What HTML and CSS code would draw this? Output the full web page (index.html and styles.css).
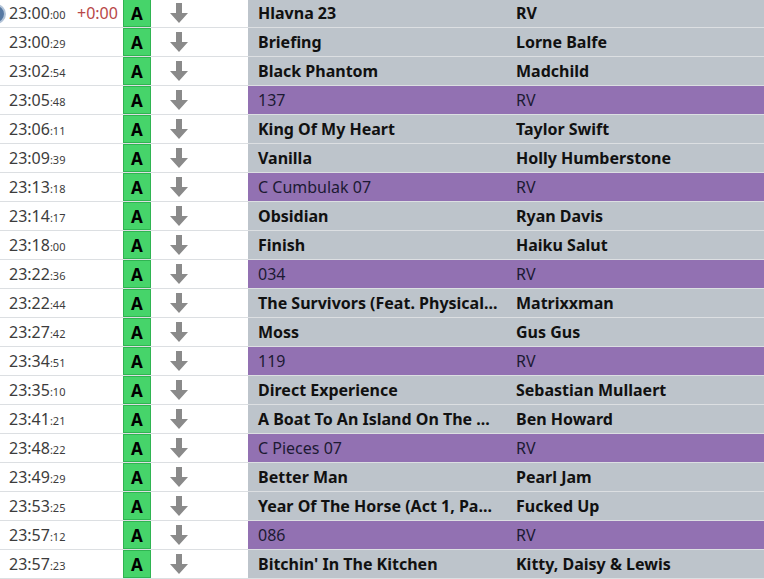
FILE: index.html
```html
<!DOCTYPE html>
<html>
<head>
<meta charset="utf-8">
<link rel="stylesheet" href="styles.css">
</head>
<body>
<div class="list">
  <div class="row"><span class="dot"></span><div class="time">23:00<small>:00</small></div><div class="offset">+0:00</div><div class="flag">A</div><div class="move"><svg viewBox="0 0 18 20" width="18" height="20"><path d="M6 0h6v10h6l-9 10l-9-10h6z" fill="#8a8a8a"/></svg></div><div class="info"><div class="title">Hlavna 23</div><div class="artist">RV</div></div></div>
  <div class="row"><div class="time">23:00<small>:29</small></div><div class="offset"></div><div class="flag">A</div><div class="move"><svg viewBox="0 0 18 20" width="18" height="20"><path d="M6 0h6v10h6l-9 10l-9-10h6z" fill="#8a8a8a"/></svg></div><div class="info"><div class="title">Briefing</div><div class="artist">Lorne Balfe</div></div></div>
  <div class="row"><div class="time">23:02<small>:54</small></div><div class="offset"></div><div class="flag">A</div><div class="move"><svg viewBox="0 0 18 20" width="18" height="20"><path d="M6 0h6v10h6l-9 10l-9-10h6z" fill="#8a8a8a"/></svg></div><div class="info"><div class="title">Black Phantom</div><div class="artist">Madchild</div></div></div>
  <div class="row"><div class="time">23:05<small>:48</small></div><div class="offset"></div><div class="flag">A</div><div class="move"><svg viewBox="0 0 18 20" width="18" height="20"><path d="M6 0h6v10h6l-9 10l-9-10h6z" fill="#8a8a8a"/></svg></div><div class="info jingle"><div class="title">137</div><div class="artist">RV</div></div></div>
  <div class="row"><div class="time">23:06<small>:11</small></div><div class="offset"></div><div class="flag">A</div><div class="move"><svg viewBox="0 0 18 20" width="18" height="20"><path d="M6 0h6v10h6l-9 10l-9-10h6z" fill="#8a8a8a"/></svg></div><div class="info"><div class="title">King Of My Heart</div><div class="artist">Taylor Swift</div></div></div>
  <div class="row"><div class="time">23:09<small>:39</small></div><div class="offset"></div><div class="flag">A</div><div class="move"><svg viewBox="0 0 18 20" width="18" height="20"><path d="M6 0h6v10h6l-9 10l-9-10h6z" fill="#8a8a8a"/></svg></div><div class="info"><div class="title">Vanilla</div><div class="artist">Holly Humberstone</div></div></div>
  <div class="row"><div class="time">23:13<small>:18</small></div><div class="offset"></div><div class="flag">A</div><div class="move"><svg viewBox="0 0 18 20" width="18" height="20"><path d="M6 0h6v10h6l-9 10l-9-10h6z" fill="#8a8a8a"/></svg></div><div class="info jingle"><div class="title">C Cumbulak 07</div><div class="artist">RV</div></div></div>
  <div class="row"><div class="time">23:14<small>:17</small></div><div class="offset"></div><div class="flag">A</div><div class="move"><svg viewBox="0 0 18 20" width="18" height="20"><path d="M6 0h6v10h6l-9 10l-9-10h6z" fill="#8a8a8a"/></svg></div><div class="info"><div class="title">Obsidian</div><div class="artist">Ryan Davis</div></div></div>
  <div class="row"><div class="time">23:18<small>:00</small></div><div class="offset"></div><div class="flag">A</div><div class="move"><svg viewBox="0 0 18 20" width="18" height="20"><path d="M6 0h6v10h6l-9 10l-9-10h6z" fill="#8a8a8a"/></svg></div><div class="info"><div class="title">Finish</div><div class="artist">Haiku Salut</div></div></div>
  <div class="row"><div class="time">23:22<small>:36</small></div><div class="offset"></div><div class="flag">A</div><div class="move"><svg viewBox="0 0 18 20" width="18" height="20"><path d="M6 0h6v10h6l-9 10l-9-10h6z" fill="#8a8a8a"/></svg></div><div class="info jingle"><div class="title">034</div><div class="artist">RV</div></div></div>
  <div class="row"><div class="time">23:22<small>:44</small></div><div class="offset"></div><div class="flag">A</div><div class="move"><svg viewBox="0 0 18 20" width="18" height="20"><path d="M6 0h6v10h6l-9 10l-9-10h6z" fill="#8a8a8a"/></svg></div><div class="info"><div class="title">The Survivors (Feat. Physical...</div><div class="artist">Matrixxman</div></div></div>
  <div class="row"><div class="time">23:27<small>:42</small></div><div class="offset"></div><div class="flag">A</div><div class="move"><svg viewBox="0 0 18 20" width="18" height="20"><path d="M6 0h6v10h6l-9 10l-9-10h6z" fill="#8a8a8a"/></svg></div><div class="info"><div class="title">Moss</div><div class="artist">Gus Gus</div></div></div>
  <div class="row"><div class="time">23:34<small>:51</small></div><div class="offset"></div><div class="flag">A</div><div class="move"><svg viewBox="0 0 18 20" width="18" height="20"><path d="M6 0h6v10h6l-9 10l-9-10h6z" fill="#8a8a8a"/></svg></div><div class="info jingle"><div class="title">119</div><div class="artist">RV</div></div></div>
  <div class="row"><div class="time">23:35<small>:10</small></div><div class="offset"></div><div class="flag">A</div><div class="move"><svg viewBox="0 0 18 20" width="18" height="20"><path d="M6 0h6v10h6l-9 10l-9-10h6z" fill="#8a8a8a"/></svg></div><div class="info"><div class="title">Direct Experience</div><div class="artist">Sebastian Mullaert</div></div></div>
  <div class="row"><div class="time">23:41<small>:21</small></div><div class="offset"></div><div class="flag">A</div><div class="move"><svg viewBox="0 0 18 20" width="18" height="20"><path d="M6 0h6v10h6l-9 10l-9-10h6z" fill="#8a8a8a"/></svg></div><div class="info"><div class="title">A Boat To An Island On The ...</div><div class="artist">Ben Howard</div></div></div>
  <div class="row"><div class="time">23:48<small>:22</small></div><div class="offset"></div><div class="flag">A</div><div class="move"><svg viewBox="0 0 18 20" width="18" height="20"><path d="M6 0h6v10h6l-9 10l-9-10h6z" fill="#8a8a8a"/></svg></div><div class="info jingle"><div class="title">C Pieces 07</div><div class="artist">RV</div></div></div>
  <div class="row"><div class="time">23:49<small>:29</small></div><div class="offset"></div><div class="flag">A</div><div class="move"><svg viewBox="0 0 18 20" width="18" height="20"><path d="M6 0h6v10h6l-9 10l-9-10h6z" fill="#8a8a8a"/></svg></div><div class="info"><div class="title">Better Man</div><div class="artist">Pearl Jam</div></div></div>
  <div class="row"><div class="time">23:53<small>:25</small></div><div class="offset"></div><div class="flag">A</div><div class="move"><svg viewBox="0 0 18 20" width="18" height="20"><path d="M6 0h6v10h6l-9 10l-9-10h6z" fill="#8a8a8a"/></svg></div><div class="info"><div class="title">Year Of The Horse (Act 1, Pa...</div><div class="artist">Fucked Up</div></div></div>
  <div class="row"><div class="time">23:57<small>:12</small></div><div class="offset"></div><div class="flag">A</div><div class="move"><svg viewBox="0 0 18 20" width="18" height="20"><path d="M6 0h6v10h6l-9 10l-9-10h6z" fill="#8a8a8a"/></svg></div><div class="info jingle"><div class="title">086</div><div class="artist">RV</div></div></div>
  <div class="row"><div class="time">23:57<small>:23</small></div><div class="offset"></div><div class="flag">A</div><div class="move"><svg viewBox="0 0 18 20" width="18" height="20"><path d="M6 0h6v10h6l-9 10l-9-10h6z" fill="#8a8a8a"/></svg></div><div class="info"><div class="title">Bitchin' In The Kitchen</div><div class="artist">Kitty, Daisy &amp; Lewis</div></div></div>
</div>
</body>
</html>
```

FILE: styles.css
```css
html, body {
  margin: 0;
  padding: 0;
  background: #ffffff;
  overflow: hidden;
}
body {
  font-family: "Noto Sans", "Open Sans", sans-serif;
  width: 764px;
  height: 579px;
}
.list {
  margin-top: -1px;
}
.row {
  position: relative;
  display: flex;
  height: 28px;
  border-bottom: 1px solid #dcdfe2;
  align-items: stretch;
}
.dot {
  position: absolute;
  left: -14px;
  top: 5px;
  width: 16px;
  height: 16px;
  border-radius: 50%;
  background: #5779a3;
  border: 2px solid #b3c4d8;
}
.time {
  width: 68px;
  padding-left: 9px;
  box-sizing: border-box;
  display: flex;
  align-items: center;
  font-size: 16px;
  color: #3c3c3c;
  white-space: nowrap;
}
.time small {
  font-size: 11px;
  margin-top: 3px;
}
.offset {
  width: 55px;
  padding-left: 9px;
  box-sizing: border-box;
  display: flex;
  align-items: center;
  font-size: 16px;
  color: #b84848;
}
.flag {
  width: 28px;
  box-sizing: border-box;
  background: #46d46a;
  border: 1px solid #2fb451;
  display: flex;
  align-items: center;
  justify-content: center;
  font-weight: 700;
  font-size: 17px;
  color: #000;
}
.move {
  width: 97px;
  padding-left: 19px;
  box-sizing: border-box;
  display: flex;
  align-items: center;
}
.info {
  flex: 1;
  display: flex;
  background: #bdc4cb;
  font-weight: 700;
  font-size: 16px;
  color: #111;
}
.info.jingle {
  background: #9271b2;
  font-weight: 400;
  color: #1c1a33;
}
.title {
  width: 258px;
  padding-left: 10px;
  box-sizing: border-box;
  display: flex;
  align-items: center;
  white-space: nowrap;
  overflow: hidden;
}
.artist {
  flex: 1;
  padding-left: 10px;
  display: flex;
  align-items: center;
  white-space: nowrap;
}
```
